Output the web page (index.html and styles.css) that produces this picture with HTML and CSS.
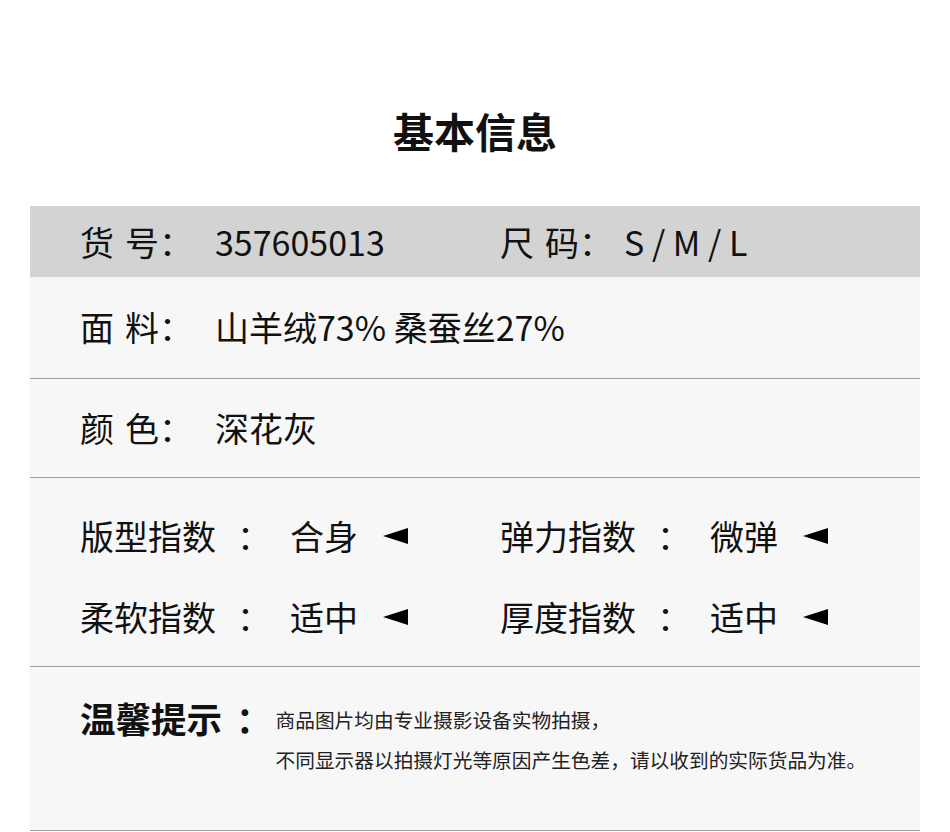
FILE: index.html
```html
<!DOCTYPE html>
<html lang="zh-CN">
<head>
<meta charset="utf-8">
<title>基本信息</title>
<link rel="stylesheet" href="styles.css">
</head>
<body>
<div class="page">
  <h1 class="title">基本信息</h1>
  <div class="table">
    <div class="row head">
      <div class="pair pair-left">
        <span class="label">货<span class="sp"></span>号：</span>
        <span class="value">357605013</span>
      </div>
      <div class="pair pair-right">
        <span class="label">尺<span class="sp"></span>码：</span>
        <span class="value sizes">S / M / L</span>
      </div>
    </div>
    <div class="row fabric">
      <span class="label">面<span class="sp"></span>料：</span>
      <span class="value">山羊绒73% 桑蚕丝27%</span>
    </div>
    <div class="row color">
      <span class="label">颜<span class="sp"></span>色：</span>
      <span class="value">深花灰</span>
    </div>
    <div class="row indexes">
      <div class="idx">
        <span class="ilabel">版型指数</span><span class="icolon">：</span><span class="ivalue">合身</span>
        <svg class="tri" viewBox="0 0 25 16" width="25" height="16"><polygon points="0,8 25,0 25,16"/></svg>
      </div>
      <div class="idx">
        <span class="ilabel">弹力指数</span><span class="icolon">：</span><span class="ivalue">微弹</span>
        <svg class="tri" viewBox="0 0 25 16" width="25" height="16"><polygon points="0,8 25,0 25,16"/></svg>
      </div>
      <div class="idx">
        <span class="ilabel">柔软指数</span><span class="icolon">：</span><span class="ivalue">适中</span>
        <svg class="tri" viewBox="0 0 25 16" width="25" height="16"><polygon points="0,8 25,0 25,16"/></svg>
      </div>
      <div class="idx">
        <span class="ilabel">厚度指数</span><span class="icolon">：</span><span class="ivalue">适中</span>
        <svg class="tri" viewBox="0 0 25 16" width="25" height="16"><polygon points="0,8 25,0 25,16"/></svg>
      </div>
    </div>
    <div class="row tips">
      <div class="tips-label">温馨提示<span class="tips-colon">：</span></div>
      <div class="tips-text">
        <p>商品图片均由专业摄影设备实物拍摄，</p>
        <p>不同显示器以拍摄灯光等原因产生色差，请以收到的实际货品为准。</p>
      </div>
    </div>
  </div>
</div>
</body>
</html>
```

FILE: styles.css
```css
* { box-sizing: border-box; }
html, body { margin: 0; padding: 0; background: #fff; }
body {
  font-family: "Noto Sans CJK SC", "Noto Sans", sans-serif;
  color: #111;
}
.page { width: 950px; }
.title {
  margin: 0;
  height: 206px;
  padding-top: 100px;
  line-height: 60px;
  font-size: 41px;
  font-weight: 700;
  text-align: center;
  color: #111;
}
.table { margin: 0 30px; }
.row {
  background: #f7f7f7;
  border-bottom: 1px solid #9c9c9c;
  padding-left: 50px;
  font-size: 34px;
  line-height: 40px;
}
.row.head {
  background: #d3d3d3;
  border-bottom: none;
  height: 71px;
  display: flex;
  align-items: center;
}
.pair { display: flex; align-items: center; }
.pair-left { width: 420px; }
.label { display: inline-flex; }
.sp { display: inline-block; width: 11px; }
.value { margin-left: 22px; }
.pair-right .value { margin-left: 11px; }
.row.fabric {
  height: 102px;
  display: flex;
  align-items: center;
  padding-bottom: 2px;
}
.row.color {
  height: 99px;
  display: flex;
  align-items: center;
}
.row.indexes {
  height: 189px;
  display: grid;
  grid-template-columns: 420px 420px;
  align-content: center;
  row-gap: 41px;
  padding-top: 8px;
}
.idx { display: flex; align-items: center; }
.icolon { margin-left: 21px; }
.ivalue { margin-left: 19px; }
.tri { margin-left: 25px; fill: #000; display: block; }
.row.tips {
  height: 164px;
  display: flex;
  align-items: flex-start;
  padding-top: 30px;
}
.tips-label {
  font-size: 35.5px;
  font-weight: 700;
  line-height: 42px;
  display: flex;
}
.tips-colon { margin-left: 14px; }
.tips-text {
  margin-left: 4px;
  margin-top: 3px;
  font-size: 19.7px;
  line-height: 40px;
  color: #222;
}
.tips-text p { margin: 0; }
```
